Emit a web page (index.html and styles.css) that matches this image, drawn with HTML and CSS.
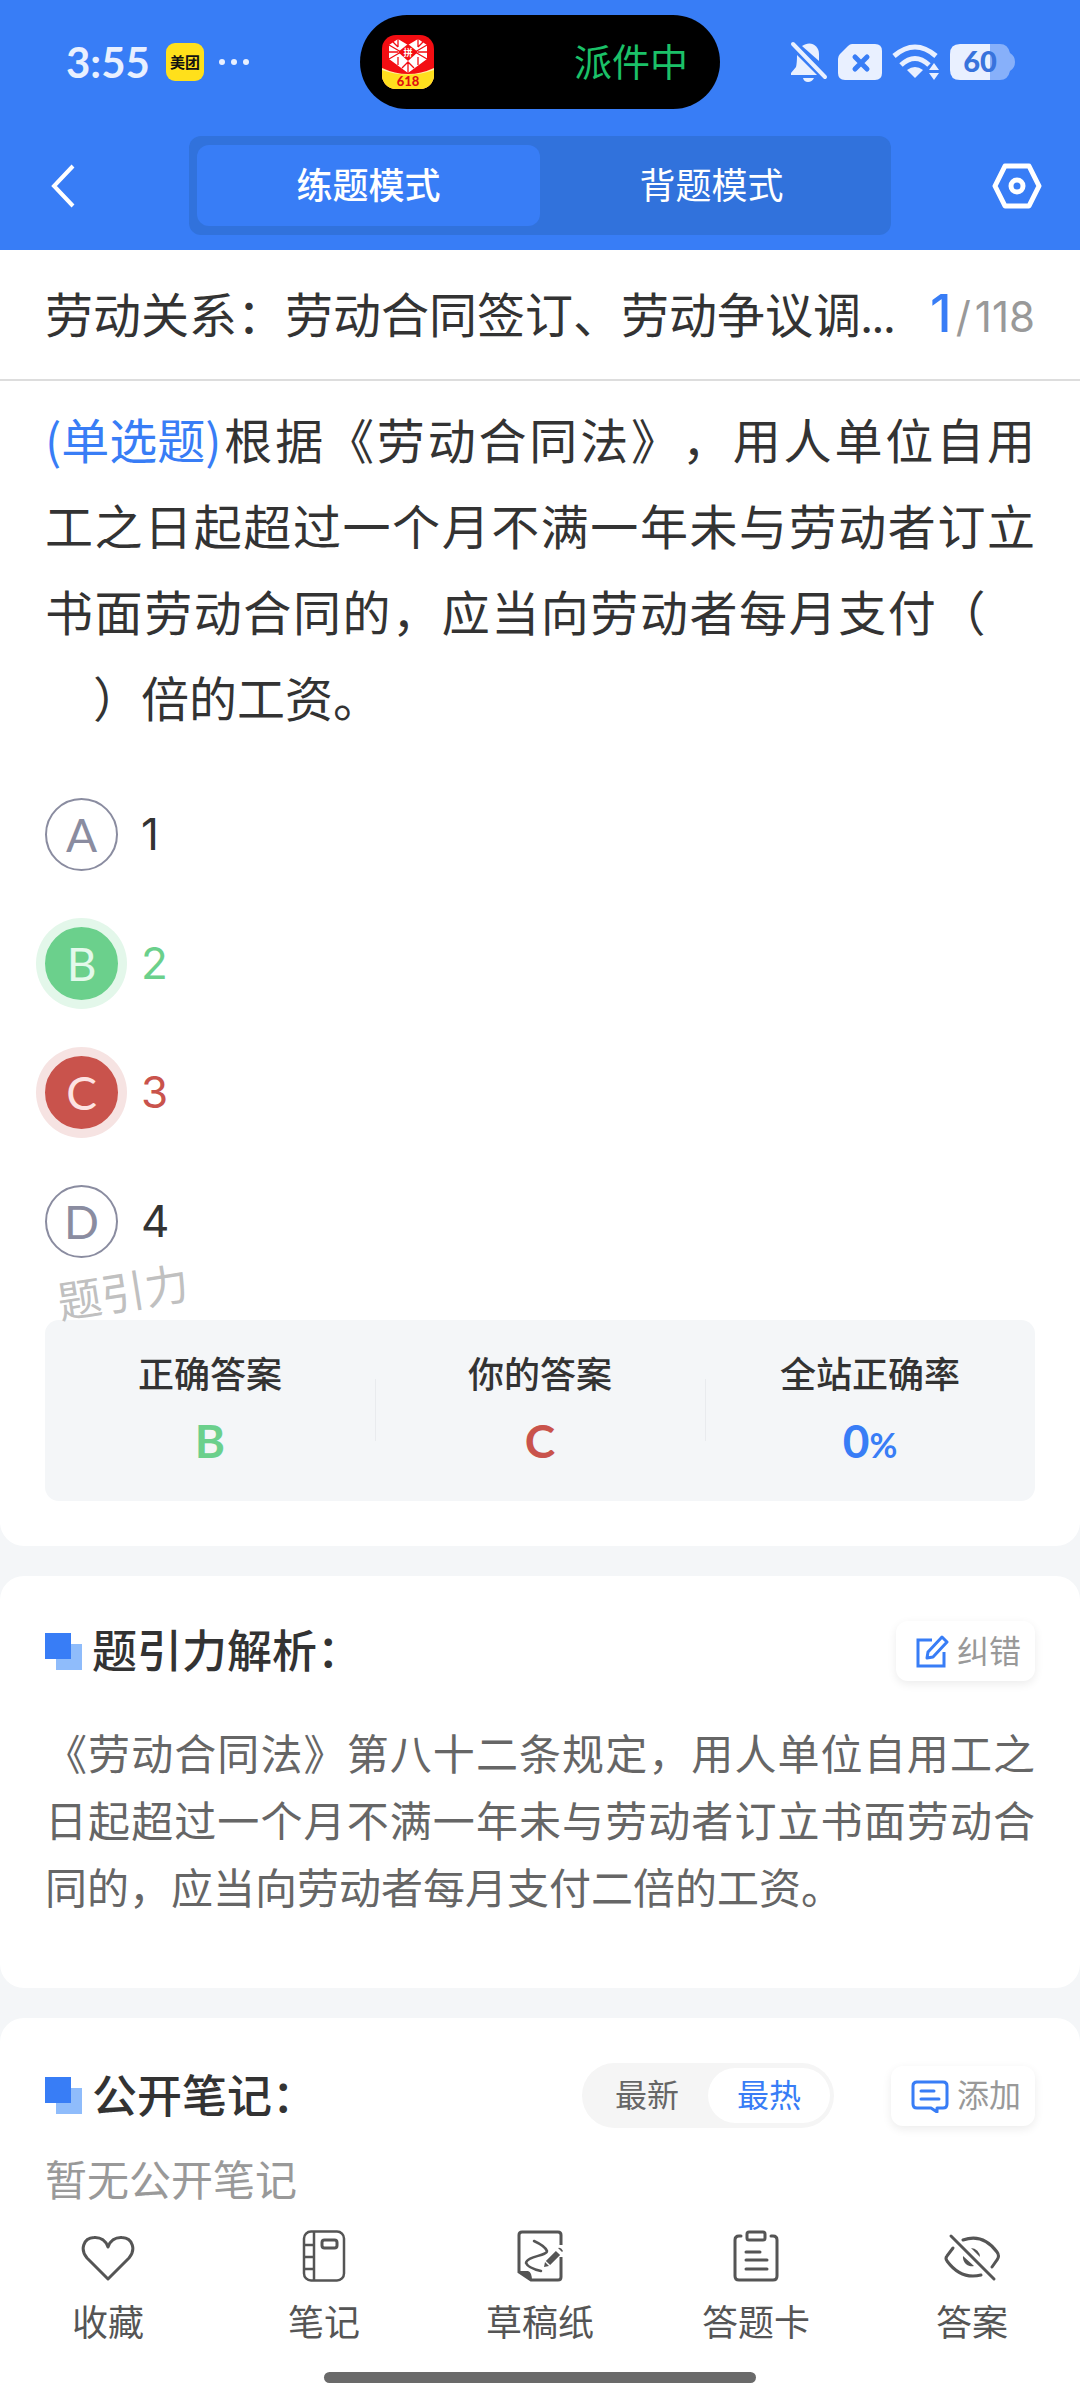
FILE: index.html
```html
<!DOCTYPE html>
<html lang="zh-CN">
<head>
  <meta charset="UTF-8" />
  <meta name="viewport" content="width=device-width, initial-scale=1" />
  <title>练题模式</title>
  <link rel="stylesheet" href="styles.css">
</head>
<body>

  <header class="top">
    <div class="status">
      <div class="status-left">
        <span class="time">3:55</span>
        <span class="app-badge">美团</span>
        <svg class="dots" width="32" height="8" viewBox="0 0 32 8" fill="#e9f0ff"><circle cx="4" cy="4" r="3"/><circle cx="16" cy="4" r="3"/><circle cx="28" cy="4" r="3"/></svg>
      </div>
      <div class="island">
        <svg width="52" height="54" viewBox="0 0 52 54">
          <defs><clipPath id="appClip"><rect width="52" height="54" rx="14"/></clipPath></defs>
          <g clip-path="url(#appClip)">
            <rect width="52" height="54" fill="#f30d12"/>
            <path d="M0 33Q26 45 52 33V54H0z" fill="#fff0a8"/>
            <path d="M0 35Q26 44 52 35V54H0z" fill="#ffdf1e"/>
            <path d="M16 4L26 10L36 4L45 10V24L26 38L7 24V10z" fill="#fff"/>
            <path d="M16 4V12M36 4V12M16 22V30M36 22V30M7 10L19 17M45 10L33 17M7 24L19 17M45 24L33 17M7 17H16M36 17H45M26 27V38M11 7L16 12M41 7L36 12M20 33L26 27L32 33" stroke="#f30d12" stroke-width="1.3" fill="none"/>
            <path d="M26 9L36 17L26 26L16 17z" fill="#f30d12"/>
            <text class="app-mark" x="26" y="21" text-anchor="middle">拼</text>
            <text class="app-num" x="26" y="51" text-anchor="middle">618</text>
          </g>
        </svg>
        <span>派件中</span>
      </div>
      <div class="status-right">
        <svg width="38" height="42" viewBox="0 0 38 42" fill="#e9f0ff">
          <path d="M12 5C20-1 29 4 29 13V20z"/>
          <path d="M7 14L27 34H1V32L6 26Q7 22 7 14z"/>
          <path d="M13 37H24Q22 41 18 41T13 37z"/>
          <path d="M3 3L35 36" stroke="#e9f0ff" stroke-width="4" stroke-linecap="round"/>
        </svg>
        <svg width="44" height="36" viewBox="0 0 44 36">
          <path d="M14 0H37Q44 0 44 7V29Q44 36 37 36H7Q0 36 0 29V15Q0 12 2 10L10 2Q12 0 14 0z" fill="#e9f0ff"/>
          <path d="M17 13L29 25M29 13L17 25" stroke="#387df6" stroke-width="5" stroke-linecap="round"/>
        </svg>
        <svg width="48" height="36" viewBox="0 0 48 36">
          <g fill="none" stroke="#e9f0ff" stroke-width="5"><path d="M2 12Q23-6 44 12"/><path d="M9 21Q23 8 37 21"/></g>
          <path d="M15 26Q23 20 31 26L23 34z" fill="#e9f0ff"/>
          <path d="M42 19L47 26H37zM42 36L47 29H37z" fill="#e9f0ff"/>
        </svg>
        <svg width="65" height="36" viewBox="0 0 65 36">
          <path d="M40 0H50Q58 0 60 9Q65 12 65 18T60 27Q58 36 50 36H40z" fill="#87b0fa"/>
          <path d="M10 0H40V36H10Q0 36 0 26V10Q0 0 10 0z" fill="#e9f0ff"/>
          <text class="battery-num" x="30" y="28" text-anchor="middle">60</text>
        </svg>
      </div>
    </div>

    <div class="nav">
      <button class="icon-btn" aria-label="返回">
        <svg width="26" height="44" viewBox="0 0 26 44" fill="none" stroke="#fff" stroke-width="4"><path d="M23 2L4 22L23 42"/></svg>
      </button>
      <div class="mode">
        <button class="active">练题模式</button>
        <button>背题模式</button>
      </div>
      <button class="icon-btn" aria-label="设置">
        <svg width="50" height="46" viewBox="0 0 50 46" fill="none" stroke="#fff" stroke-width="5" stroke-linejoin="round"><path d="M13 3H37L47 23L37 43H13L3 23z"/><circle cx="25" cy="23" r="6"/></svg>
      </button>
    </div>
  </header>

  <div class="title-bar">
    <h1>劳动关系：劳动合同签订、劳动争议调...</h1>
    <div class="progress"><b>1</b><span>/</span>118</div>
  </div>

  <main>
    <section class="card question">
      <p class="stem"><span class="type">(单选题)</span>根据《劳动合同法》，用人单位自用工之日起超过一个月不满一年未与劳动者订立书面劳动合同的，应当向劳动者每月支付（<i class="blank"></i><wbr><i class="blank"></i>）倍的工资。</p>

      <div class="options">
        <button class="option"><span class="letter">A</span>1</button>
        <button class="option right"><span class="letter">B</span>2</button>
        <button class="option wrong"><span class="letter">C</span>3</button>
        <button class="option"><span class="letter">D</span>4</button>
      </div>

      <div class="result">
        <span class="watermark">题引力</span>
        <div class="result-item"><h3>正确答案</h3><p class="green">B</p></div>
        <div class="result-item"><h3>你的答案</h3><p class="red">C</p></div>
        <div class="result-item"><h3>全站正确率</h3><p class="blue">0<small>%</small></p></div>
      </div>
    </section>

    <section class="card analysis">
      <div class="card-head">
        <h2>题引力解析：</h2>
        <button class="tool">
          <svg width="33" height="34" viewBox="0 0 33 34" fill="none" stroke="#387df6" stroke-width="3"><path d="M16 6H2V32H28V18"/><path d="M12 18L26 3L31 8L17 23L11 24z" stroke-linejoin="round"/></svg>
          纠错
        </button>
      </div>
      <p class="analysis-text">《劳动合同法》第八十二条规定，用人单位自用工之日起超过一个月不满一年未与劳动者订立书面劳动合同的，应当向劳动者每月支付二倍的工资。</p>
    </section>

    <section class="card notes">
      <div class="card-head">
        <h2>公开笔记：</h2>
        <div class="sort">
          <button>最新</button>
          <button class="active">最热</button>
        </div>
        <button class="tool">
          <svg width="38" height="34" viewBox="0 0 38 34" fill="none" stroke="#387df6" stroke-width="3" stroke-linecap="round" stroke-linejoin="round"><path d="M5 3H32Q36 3 36 7V25Q36 29 32 29H26V33L20 29H6Q2 29 2 25V7Q2 3 6 3z"/><path d="M10 12H23M10 20H28"/></svg>
          添加
        </button>
      </div>
      <p class="empty">暂无公开笔记</p>
    </section>
  </main>

  <footer class="bottom">
    <nav class="tabs">
      <a href="#">
        <svg width="54" height="52" viewBox="0 0 54 52" fill="none" stroke="#555" stroke-width="3" stroke-linejoin="round"><path d="M27 49L6 28C-1 20 2 8 13 7.500C20 7 25 11 27 17C29 11 34 7 41 7.500C52 8 55 20 48 28z"/></svg>
        收藏
      </a>
      <a href="#">
        <svg width="52" height="52" viewBox="0 0 52 52" fill="none" stroke="#555" stroke-width="2.500"><rect x="6" y="1.500" width="40" height="49" rx="7"/><path d="M16 2V50M6 15H16M6 27H16M6 39H16"/><rect x="24" y="10" width="15" height="8" rx="2.500" stroke-width="3"/></svg>
        笔记
      </a>
      <a href="#">
        <svg width="52" height="52" viewBox="0 0 52 52" fill="none" stroke="#555" stroke-width="3"><path d="M47 15V5Q47 2 44 2H8Q5 2 5 5V42L17 50H44Q47 50 47 47V27"/><path d="M5 41H14Q18 42 18 51z" fill="#555" stroke="none"/><path d="M20 11Q31 16 33 21C33 26 13 26 12 33Q14 38 27 41" stroke-width="2.500" stroke-linecap="round"/><path d="M34 33L44 23" stroke-width="6"/><path d="M30 37L31 32L35 36zM44 18L48 22L49 21Q47 17 44 18z" fill="#555" stroke="none"/></svg>
        草稿纸
      </a>
      <a href="#">
        <svg width="52" height="52" viewBox="0 0 52 52" fill="none" stroke="#555" stroke-width="3" stroke-linecap="round"><path d="M11 6H9Q5 6 5 10V46Q5 50 9 50H43Q47 50 47 46V10Q47 6 43 6H41"/><rect x="17" y="2" width="18" height="8" rx="2"/><path d="M16 22H30M16 30H37M16 39H37"/></svg>
        答题卡
      </a>
      <a href="#">
        <svg width="58" height="52" viewBox="0 0 58 52" fill="none" stroke="#555" stroke-width="3" stroke-linecap="round"><path d="M8 6L51 49"/><path d="M20 10Q40 3 54 22Q57 26 54 30L49 37"/><path d="M10 18L4 26Q2 28 4 31Q18 50 38 45"/><path d="M28 18A9 9 0 0 1 37 27z M20 26A9 9 0 0 0 31 36z" fill="#555" stroke="none"/></svg>
        答案
      </a>
    </nav>
    <div class="home-bar"></div>
  </footer>

</body>
</html>
```
FILE: styles.css
```css
* {
  box-sizing: border-box;
  margin: 0;
  padding: 0;
}
body {
  min-height: 100vh;
  display: flex;
  flex-direction: column;
  font-family: Lato, "Noto Sans CJK SC", sans-serif;
  line-height: 1.2;
  color: #333;
  background: #f4f6f8;
  text-spacing-trim: space-all;
}
button {
  border: none;
  background: none;
  color: inherit;
  font: inherit;
  cursor: pointer;
}
svg {
  display: block;
  flex-shrink: 0;
}

/* top */
.top {
  background: #387df6;
  color: #fff;
}
.status {
  display: grid;
  grid-template-columns: 1fr 360px 1fr;
  align-items: center;
  height: 124px;
}
.status-left {
  display: flex;
  align-items: center;
  padding-left: 66px;
}
.time {
  font-size: 42px;
  font-weight: bold;
  color: #e9f0ff;
}
.app-badge {
  width: 38px;
  margin: 0 14px 0 16px;
  border-radius: 9px;
  background: #ffe01b;
  color: #111;
  font-size: 15px;
  font-weight: bold;
  line-height: 38px;
  text-align: center;
}
.island {
  display: flex;
  align-items: center;
  justify-content: space-between;
  height: 94px;
  padding: 0 32px 0 22px;
  border-radius: 47px;
  background: #000;
  color: #1bc168;
  font-size: 38px;
}
.app-mark {
  font-size: 9px;
  font-weight: bold;
  fill: #fff;
}
.app-num {
  font-size: 13px;
  font-weight: 900;
  fill: #e01010;
}
.status-right {
  display: flex;
  align-items: center;
  justify-content: flex-end;
  gap: 10px;
  padding-right: 65px;
}
.battery-num {
  font-size: 29px;
  font-weight: 900;
  fill: #3873dc;
}
.nav {
  display: flex;
  align-items: center;
  justify-content: space-between;
  padding: 12px 38px 15px;
}
.icon-btn {
  display: flex;
  justify-content: center;
  width: 50px;
}
.mode {
  display: flex;
  width: 65vw;
  height: 99px;
  padding: 9px 8px;
  border-radius: 12px;
  background: #3172dc;
}
.mode button {
  flex: 1;
  border-radius: 12px;
  font-size: 36px;
}
.mode .active {
  background: #387df6;
  font-weight: 500;
}

/* title */
.title-bar {
  display: flex;
  align-items: center;
  gap: 12px;
  height: 131px;
  padding: 0 45px;
  border-bottom: 2px solid #ddd;
  background: #fff;
}
.title-bar h1 {
  flex: 1;
  overflow: hidden;
  white-space: nowrap;
  text-overflow: ellipsis;
  font-size: 48px;
  font-weight: normal;
}
.progress {
  color: #999;
  font-family: Inter, sans-serif;
  font-size: 42px;
}
.progress b {
  color: #387df6;
  font-size: 52px;
  font-weight: 500;
}
.progress span {
  margin: 0 4px;
}

/* cards */
main {
  flex: 1;
  display: flex;
  flex-direction: column;
  gap: 30px;
}
.card {
  padding: 45px;
  border-radius: 24px;
  background: #fff;
}
.question {
  padding-top: 17px;
  border-radius: 0 0 24px 24px;
}
.stem {
  font-size: 48px;
  line-height: 86px;
  text-align: justify;
}
.type {
  display: inline-block;
  color: #387df6;
  font-family: "Noto Sans CJK SC", sans-serif;
  line-height: 1;
}
.blank {
  display: inline-block;
  width: 1em;
}
.options {
  margin: 28px 0 34px;
}
.option {
  display: flex;
  align-items: center;
  gap: 23px;
  width: 100%;
  height: 129px;
  font-family: Inter, sans-serif;
  font-size: 44px;
}
.letter {
  width: 73px;
  border: 2px solid #8a8ca0;
  border-radius: 50%;
  color: #8a8ca0;
  font-family: Lato, sans-serif;
  font-size: 46px;
  line-height: 69px;
  text-align: center;
}
.right { color: #6bd08c; }
.wrong { color: #c9534c; }
.right .letter {
  border-color: #6bd08c;
  background: #6bd08c;
  color: #e3f9eb;
  box-shadow: 0 0 0 9px #e3f7ea;
}
.wrong .letter {
  border-color: #c9534c;
  background: #c9534c;
  color: #fde3e2;
  box-shadow: 0 0 0 9px #f6e3e2;
}
.result {
  position: relative;
  display: flex;
  padding: 27px 0 28px;
  border-radius: 14px;
  background: #f4f6f8;
}
.watermark {
  position: absolute;
  left: 12px;
  top: -54px;
  color: #c0c0c0;
  font-size: 44px;
  transform: rotate(-9deg);
}
.result-item {
  flex: 1;
  text-align: center;
}
.result-item + .result-item {
  background: linear-gradient(#e9ebee, #e9ebee) left center / 1px 62px no-repeat;
}
.result-item h3 {
  font-size: 36px;
  font-weight: 500;
  line-height: 54px;
}
.result-item p {
  margin-top: 8px;
  font-size: 46px;
  font-weight: bold;
  line-height: 64px;
}
.result-item small {
  font-size: 34px;
  line-height: 1;
}
.green { color: #6bd08c; }
.red { color: #c9534c; }
.blue { color: #387df6; }

.card-head {
  display: flex;
  align-items: center;
}
.card-head h2 {
  flex: 1;
  display: flex;
  align-items: center;
  gap: 10px;
  font-size: 45px;
  font-weight: 500;
  line-height: 60px;
}
.card-head h2::before {
  content: "";
  width: 37px;
  height: 37px;
  background:
    linear-gradient(#387df6, #387df6) left top / 26px 26px no-repeat,
    linear-gradient(#8fbcfb, #8fbcfb) right bottom / 26px 26px no-repeat;
}
.tool {
  display: flex;
  align-items: center;
  gap: 8px;
  height: 60px;
  padding: 0 14px 0 20px;
  border-radius: 12px;
  color: #999;
  font-size: 32px;
  box-shadow: 0 3px 10px rgba(0, 0, 0, 0.08);
}
.analysis {
  padding-bottom: 66px;
}
.analysis-text {
  margin-top: 40px;
  color: #666;
  font-size: 42px;
  line-height: 67px;
  text-align: justify;
}
.notes {
  flex: 1;
  padding-bottom: 0;
  border-radius: 24px 24px 0 0;
}
.sort {
  display: flex;
  height: 65px;
  margin-right: 57px;
  padding: 5px 4px;
  border-radius: 33px;
  background: #f5f5f5;
  font-size: 32px;
}
.sort button {
  padding: 0 29px;
  border-radius: 28px;
  color: #666;
}
.sort .active {
  background: #fff;
  color: #387df6;
}
.empty {
  margin-top: 19px;
  color: #999;
  font-size: 42px;
  line-height: 67px;
}

/* bottom */
.bottom {
  position: sticky;
  bottom: 0;
  padding: 15px 0 17px;
  background: #fff;
}
.tabs {
  display: flex;
}
.tabs a {
  flex: 1;
  display: flex;
  flex-direction: column;
  align-items: center;
  gap: 18px;
  color: #555;
  font-size: 36px;
  line-height: 44px;
  text-decoration: none;
}
.home-bar {
  width: 40%;
  height: 11px;
  margin: 28px auto 0;
  border-radius: 6px;
  background: #6a6a6a;
}
```
